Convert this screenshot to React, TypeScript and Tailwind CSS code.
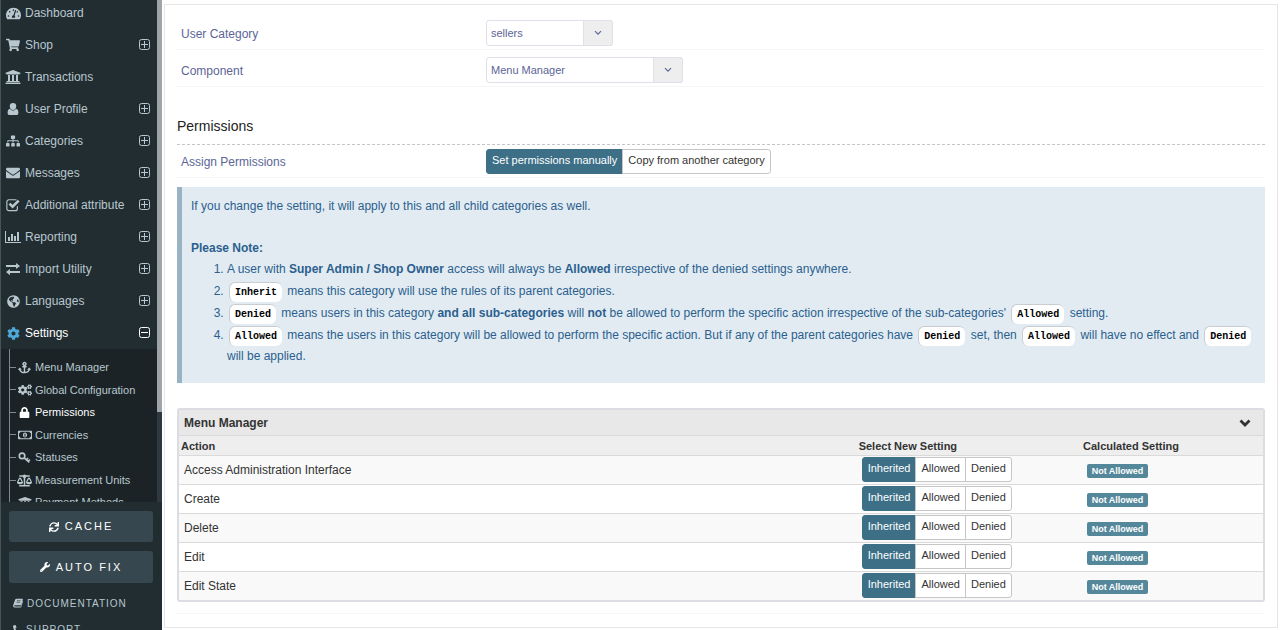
import React, { useState } from 'react';
import {
  FaAnchor, FaBalanceScale, FaCog, FaCogs, FaEnvelope, FaGlobeAmericas, FaLock, FaPhone,
  FaRegMoneyBillAlt, FaShoppingCart, FaSitemap, FaSync, FaTachometerAlt, FaUniversity, FaWrench
} from 'react-icons/fa';

interface IconProps {
  size?: number;
  className?: string;
}

const UserIcon = ({ size = 13, className }: IconProps) => (
  <svg width={size} height={size} viewBox="0 0 16 16" fill="currentColor" className={className} aria-hidden="true">
    <path d="M8 0a4.300 4.300 0 0 1 4.300 4.500C12.300 7 10.400 9.200 8 9.200S3.700 7 3.700 4.500A4.300 4.300 0 0 1 8 0zM4 7.600c1 1.500 2.400 2.500 4 2.500s3-1 4-2.500c2.300.3 3.200 2.700 3.200 5.300 0 1.900-1.100 3.100-2.700 3.100h-9C1.900 16 .8 14.800.8 12.900.8 10.300 1.700 7.900 4 7.600z" />
  </svg>
);

const CheckSquareIcon = ({ size = 14, className }: IconProps) => (
  <svg width={size} height={size} viewBox="0 0 16 16" fill="none" stroke="currentColor" className={className} aria-hidden="true">
    <path d="M13 9.500v2.700a2.300 2.300 0 0 1-2.300 2.300H3.300A2.300 2.300 0 0 1 1 12.200V4.300A2.300 2.300 0 0 1 3.300 2h7.400q.7 0 1.200.3" strokeWidth="1.300" />
    <path d="M4 6.500l3.500 3.500L14.500 3" strokeWidth="3" />
  </svg>
);

const BarChartIcon = ({ size = 16, className }: IconProps) => (
  <svg width={size} height={size} viewBox="0 0 16 16" fill="currentColor" className={className} aria-hidden="true">
    <path d="M0 2h1v11h15v1H0zM3 8h2v4H3zM6 5h2v7H6zM9 7h2v5H9zM12 3h2v9h-2z" />
  </svg>
);

const ExchangeIcon = ({ size = 14, className }: IconProps) => (
  <svg width={size} height={size} viewBox="0 0 16 16" fill="currentColor" className={className} aria-hidden="true">
    <path d="M0 3.500h11.500V1L16 4.500 11.500 8V5.600H0zM16 10.400H4.500V8L0 11.500 4.500 15v-2.500H16z" />
  </svg>
);

const KeyIcon = ({ size = 13, className }: IconProps) => (
  <svg width={size} height={size} viewBox="0 0 16 16" fill="none" stroke="currentColor" className={className} aria-hidden="true">
    <circle cx="5" cy="6" r="3.400" strokeWidth="2" />
    <path d="M7.500 8.500l6.500 5.500M10.300 11l2-2.400M12.500 13l2-2.400" strokeWidth="2" />
  </svg>
);

const BookIcon = ({ size = 10, className }: IconProps) => (
  <svg width={size} height={size} viewBox="0 0 16 16" fill="currentColor" className={className} aria-hidden="true">
    <path fillRule="evenodd" d="M5.500 1H15q1 0 .7 1.200l-2.700 8.500q-.3 1-1.300 1H3q-1.200 0-1 1.100.2.700 1.300.7h9.200L15.200 4.500q.9.500.6 1.400l-2.400 8Q13 15 11.800 15H3q-2.200 0-2.800-2-.3-1 .2-2L3.300 2.700Q4 1 5.500 1zM6.500 3.500l-.3 1H12l.3-1zM5.800 6l-.3 1h5.800l.3-1z" />
  </svg>
);

const ChevronIcon = ({ size = 12, className }: IconProps) => (
  <svg width={size} height={size} viewBox="0 0 12 12" fill="none" stroke="currentColor" className={className} aria-hidden="true">
    <path d="M1.500 3.500L6 8l4.500-4.500" strokeWidth="2.800" />
  </svg>
);

const ExpandIcon = ({ open }: { open: boolean }) => (
  <svg width="11" height="11" viewBox="0 0 11 11" fill="none" stroke="currentColor" className="mb-0.5" aria-hidden="true">
    <rect x="0.500" y="0.500" width="10" height="10" rx="2" />
    <path d={open ? 'M2 5.500h7' : 'M2 5.500h7M5.500 2v7'} />
  </svg>
);

const MENU = [
  { title: 'Dashboard', icon: FaTachometerAlt, size: 15, expandable: false },
  { title: 'Shop', icon: FaShoppingCart, size: 14, expandable: true },
  { title: 'Transactions', icon: FaUniversity, size: 16, expandable: false },
  { title: 'User Profile', icon: UserIcon, size: 12, expandable: true },
  { title: 'Categories', icon: FaSitemap, size: 14, expandable: true },
  { title: 'Messages', icon: FaEnvelope, size: 14, expandable: true },
  { title: 'Additional attribute', icon: CheckSquareIcon, size: 14, expandable: true },
  { title: 'Reporting', icon: BarChartIcon, size: 16, expandable: true },
  { title: 'Import Utility', icon: ExchangeIcon, size: 14, expandable: true },
  { title: 'Languages', icon: FaGlobeAmericas, size: 13, expandable: true },
  { title: 'Settings', icon: FaCog, size: 13, expandable: true }
];

const SETTINGS_MENU = [
  { title: 'Menu Manager', icon: FaAnchor, size: 13 },
  { title: 'Global Configuration', icon: FaCogs, size: 14 },
  { title: 'Permissions', icon: FaLock, size: 11 },
  { title: 'Currencies', icon: FaRegMoneyBillAlt, size: 14 },
  { title: 'Statuses', icon: KeyIcon, size: 13 },
  { title: 'Measurement Units', icon: FaBalanceScale, size: 15 },
  { title: 'Payment Methods', icon: FaUniversity, size: 14 }
];

const ACTIONS = ['Access Administration Interface', 'Create', 'Delete', 'Edit', 'Edit State'];
const SETTINGS = ['Inherited', 'Allowed', 'Denied'];

const Sidebar = () => (
  <aside className="flex w-[162px] shrink-0 flex-col overflow-hidden border-l border-[#46545a] bg-[#222d32] text-[#b8c7ce]">
    <div className="flex min-h-0 flex-1">
      <nav className="min-w-0 flex-1 overflow-hidden">
        <ul className="-mt-[3px]">
          {MENU.map((m) => {
            const active = m.title === 'Settings';
            return (
              <li key={m.title}>
                <a href="#" className={`flex h-8 items-center pr-[7px] text-xs ${active ? 'text-white' : ''}`}>
                  <span className="flex w-6 justify-center">
                    <m.icon size={m.size} className={active ? 'text-[#4fa9d6]' : ''} />
                  </span>
                  <span className="flex-1 whitespace-nowrap">{m.title}</span>
                  {m.expandable && <ExpandIcon open={active} />}
                </a>
              </li>
            );
          })}
        </ul>
        <div className="bg-[#1b2326] pl-2">
          <ul className="grid h-[165px] grid-rows-7 border-l border-[#7f898c] pt-[7px]">
            {SETTINGS_MENU.map((m) => (
              <li key={m.title}>
                <a href="#" className={`flex h-full items-center text-[11px] whitespace-nowrap ${m.title === 'Permissions' ? 'text-white' : ''}`}>
                  <span className="w-1.5 border-t border-[#7f898c]" />
                  <span className="mr-0.5 flex w-[17px] justify-center">
                    <m.icon size={m.size} />
                  </span>
                  {m.title}
                </a>
              </li>
            ))}
          </ul>
        </div>
      </nav>
      <div className="w-[5px] bg-[#2d393e]">
        <div className="h-[82%] bg-[#9fa4a8]" />
      </div>
    </div>

    <div className="flex h-32 shrink-0 flex-col pt-[9px] pr-[9px] pl-2">
      <button className="flex h-[31px] shrink-0 items-center justify-center gap-1.5 rounded-[3px] bg-[#37474f] text-[11px] tracking-[2px] text-white">
        <FaSync size={10} /> CACHE
      </button>
      <button className="mt-[9px] flex h-8 shrink-0 items-center justify-center gap-1.5 rounded-[3px] bg-[#37474f] text-[11px] tracking-[2px] text-white">
        <FaWrench size={10} /> AUTO FIX
      </button>
      <a href="#" className="mt-[7px] flex h-[26px] shrink-0 items-center gap-1 pl-1 text-[10px] tracking-[1px]">
        <BookIcon size={10} /> DOCUMENTATION
      </a>
      <a href="#" className="flex h-[26px] shrink-0 items-center gap-1 pl-1 text-[10px] tracking-[1px]">
        <FaPhone size={9} className="-scale-x-100" /> SUPPORT
      </a>
    </div>
  </aside>
);

interface SelectFieldProps {
  id: string;
  label: string;
  options: string[];
  width: string;
}

const SelectField: React.FC<SelectFieldProps> = ({ id, label, options, width }) => (
  <div className="flex h-[37px] items-center border-b border-[#f6f6f6] pt-1">
    <label htmlFor={id} className="w-[28.4%] pt-0.5 pl-1 text-xs text-[#5c6596]">{label}</label>
    <div className={`relative ${width}`}>
      <select
        id={id}
        className="h-[26px] w-full appearance-none rounded-[3px] border border-[#dfe0ea] bg-white pl-1 text-[11px] text-[#5c6596]"
      >
        {options.map((o) => <option key={o}>{o}</option>)}
      </select>
      <span className="pointer-events-none absolute inset-y-0 right-0 flex w-[30px] items-center justify-center rounded-r-[3px] border border-[#dfe0ea] bg-[#eeeeee] text-[#5c6596]">
        <svg width="8" height="6" viewBox="0 0 8 6" fill="none" stroke="currentColor" aria-hidden="true">
          <path d="M1 1.200l3 3 3-3" strokeWidth="1.200" />
        </svg>
      </span>
    </div>
  </div>
);

interface ToggleGroupProps {
  label: string;
  options: string[];
}

const ToggleGroup: React.FC<ToggleGroupProps> = ({ label, options }) => {
  const [selected, setSelected] = useState(options[0]);

  return (
    <div role="group" aria-label={label} className="inline-flex h-[25px] text-[11px] text-[#333333]">
      {options.map((o) => (
        <button
          key={o}
          aria-pressed={selected === o}
          onClick={() => setSelected(o)}
          className={`-ml-px border px-[5px] pb-0.5 first:ml-0 first:rounded-l-[3px] last:rounded-r-[3px] ${
            selected === o ? 'border-[#3d6f87] bg-[#3d6f87] text-white' : 'border-[#c6c6c6] bg-white'
          }`}
        >
          {o}
        </button>
      ))}
    </div>
  );
};

const Tag = ({ children }: { children: React.ReactNode }) => (
  <code className="mx-0.5 inline-block h-5 rounded-md border-t border-l border-[#c9ccd0] bg-white px-[5px] font-['Liberation_Mono',monospace] text-[10px] leading-5 font-bold text-black">
    {children}
  </code>
);

const Notes = () => (
  <div className="mt-[9px] border-l-[5px] border-[#9ab3c4] bg-[#e2ebf1] pt-[9px] pr-1 pb-4 pl-[9px] text-xs leading-[21px] text-[#2b5f8f]">
    <p>If you change the setting, it will apply to this and all child categories as well.</p>
    <p className="mt-[21px] font-bold">Please Note:</p>
    <ol className="list-decimal space-y-px pl-9">
      <li>A user with <b>Super Admin / Shop Owner</b> access will always be <b>Allowed</b> irrespective of the denied settings anywhere.</li>
      <li><Tag>Inherit</Tag> means this category will use the rules of its parent categories.</li>
      <li><Tag>Denied</Tag> means users in this category <b>and all sub-categories</b> will <b>not</b> be allowed to perform the specific action irrespective of the sub-categories' <Tag>Allowed</Tag> setting.</li>
      <li><Tag>Allowed</Tag> means the users in this category will be allowed to perform the specific action. But if any of the parent categories have <Tag>Denied</Tag> set, then <Tag>Allowed</Tag> will have no effect and <Tag>Denied</Tag> will be applied.</li>
    </ol>
  </div>
);

const PermissionTable = () => (
  <section className="mt-[25px] rounded-[3px] border-2 border-[#dcdde3] text-[#333333]">
    <button className="flex h-[26px] w-full items-center justify-between border-b border-[#d9d9dc] bg-[#e8e8e8] pr-3 pl-[5px] text-xs font-bold">
      Menu Manager
      <ChevronIcon size={12} />
    </button>
    <table className="w-full table-fixed border-collapse text-left">
      <thead>
        <tr className="h-[19px] bg-[#eeeeee] text-[11px] leading-4">
          <th className="w-[62.7%] pt-0.5 pl-0.5">Action</th>
          <th className="w-[20.7%] pt-0.5">Select New Setting</th>
          <th className="pt-0.5">Calculated Setting</th>
        </tr>
      </thead>
      <tbody>
        {ACTIONS.map((action) => (
          <tr key={action} className="h-[29px] border-t border-[#dadada] odd:bg-[#f9f9f9]">
            <td className="pl-[5px] text-xs">{action}</td>
            <td className="pl-[3px] align-top">
              <div className="flex pt-px">
                <ToggleGroup label={action} options={SETTINGS} />
              </div>
            </td>
            <td className="pl-1">
              <span className="mt-0.5 block w-[61px] rounded-[2px] bg-[#55879a] text-center text-[9px] leading-[14px] font-bold text-white">
                Not Allowed
              </span>
            </td>
          </tr>
        ))}
      </tbody>
    </table>
  </section>
);

const App = () => (
  <div className="flex h-screen overflow-hidden bg-white font-['Liberation_Sans',Arial,sans-serif]">
    <Sidebar />
    <main className="min-w-0 flex-1 overflow-hidden px-0.5 pt-1">
      <div className="border border-[#e6e6e6] px-3 pt-2">
        <SelectField id="user-category" label="User Category" options={['sellers']} width="w-[127px]" />
        <SelectField id="component" label="Component" options={['Menu Manager']} width="w-[197px]" />

        <h2 className="mt-[29px] border-b border-dashed border-[#c4c4c4] pb-[7px] text-sm leading-[21px] text-[#222222]">Permissions</h2>
        <div className="flex h-[33px] items-center border-b border-[#f6f6f6]">
          <span className="w-[28.4%] pt-0.5 pl-1 text-xs text-[#5c6596]">Assign Permissions</span>
          <ToggleGroup label="Assign Permissions" options={['Set permissions manually', 'Copy from another category']} />
        </div>

        <Notes />
        <PermissionTable />
        <div className="mt-[11px] mb-[13px] border-t border-[#f6f6f6]" />
      </div>
    </main>
  </div>
);

export default App;
